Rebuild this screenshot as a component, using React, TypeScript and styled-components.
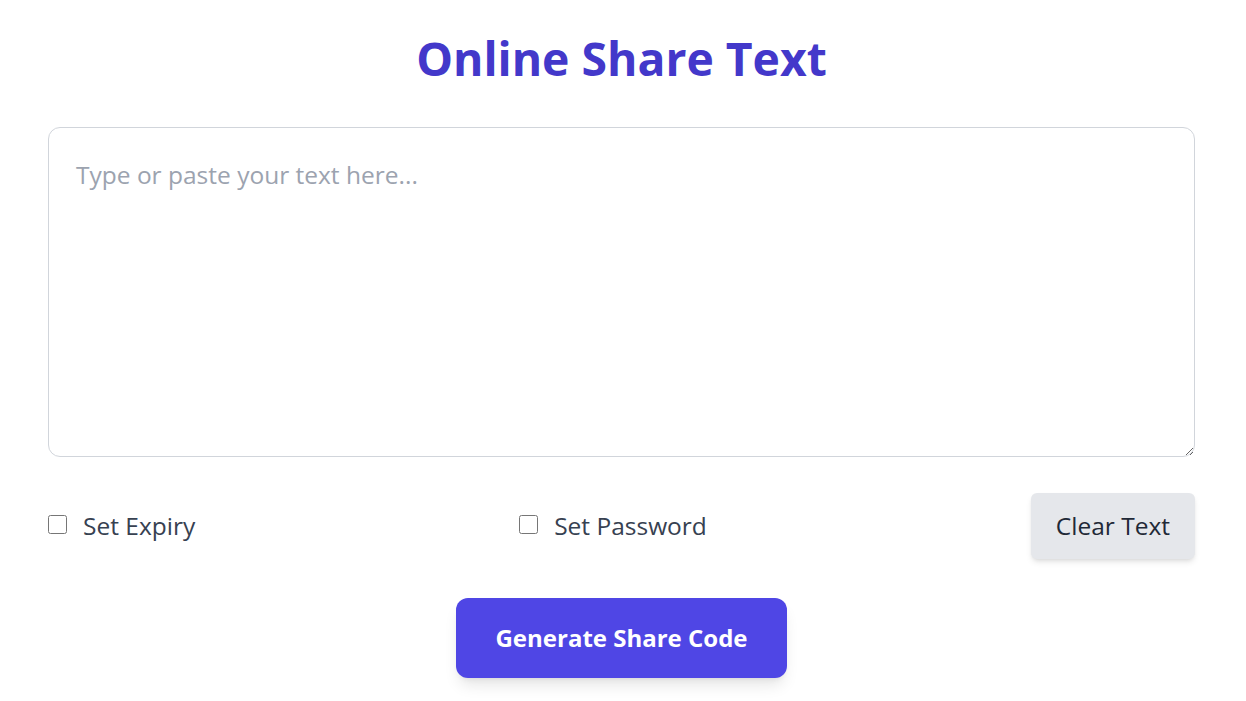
import styled, { createGlobalStyle } from "styled-components";
import { useState } from "react";

const GlobalStyle = createGlobalStyle`
    body {
        margin: 0;
        background: #ffffff;
        font-family: "Segoe UI", "Open Sans", "Noto Sans", sans-serif;
    }
    * {
        box-sizing: border-box;
    }
`

const Page = styled.div`
    padding: 31px 51px 24px 48px;
    display: flex;
    flex-direction: column;
`
const Title = styled.h1`
    margin: 0 0 40px;
    text-align: center;
    font-size: 46.3px;
    line-height: 56px;
    font-weight: 700;
    color: #4338ca;
`
const TextArea = styled.textarea`
    display: block;
    width: 100%;
    height: 330px;
    padding: 31px 27px 24px;
    border: 1px solid #d1d5db;
    border-radius: 12px;
    font-family: inherit;
    font-size: 24.5px;
    line-height: 32px;
    color: #1f2937;
    resize: vertical;
    outline: none;
    &::placeholder {
        color: #9ca3af;
    }
`
const OptionsRow = styled.div`
    margin-top: 36px;
    display: flex;
    justify-content: space-between;
    align-items: center;
`
const CheckLabel = styled.label`
    display: flex;
    align-items: center;
    gap: 16px;
    font-size: 24.5px;
    line-height: 32px;
    color: #374151;
    cursor: pointer;
`
const Check = styled.input.attrs({ type: "checkbox" })`
    width: 19px;
    height: 19px;
    margin: 0;
    margin-top: -4px;
`
const ClearButton = styled.button`
    font-family: inherit;
    font-size: 24.5px;
    line-height: 32px;
    color: #1f2937;
    background: #e5e7eb;
    border: 0;
    border-radius: 6px;
    padding: 17px 25px;
    box-shadow: 0 4px 6px -1px rgba(0, 0, 0, 0.1), 0 2px 4px -2px rgba(0, 0, 0, 0.1);
    cursor: pointer;
`
const GenerateButton = styled.button`
    align-self: center;
    margin-top: 39px;
    font-family: inherit;
    font-size: 24px;
    line-height: 32px;
    font-weight: 700;
    color: #ffffff;
    background: #4f46e5;
    border: 0;
    border-radius: 12px;
    padding: 24px 39px;
    box-shadow: 0 10px 15px -3px rgba(0, 0, 0, 0.1), 0 4px 6px -4px rgba(0, 0, 0, 0.1);
    cursor: pointer;
`

export default function App() {
    const [text, setText] = useState("");
    const [expiry, setExpiry] = useState(false);
    const [password, setPassword] = useState(false);

    return (
        <>
            <GlobalStyle />
            <Page>
                <Title>Online Share Text</Title>
                <TextArea
                    placeholder="Type or paste your text here..."
                    value={text}
                    onChange={(ev) => setText(ev.target.value)}
                />
                <OptionsRow>
                    <CheckLabel>
                        <Check checked={expiry} onChange={() => setExpiry(!expiry)} />
                        Set Expiry
                    </CheckLabel>
                    <CheckLabel>
                        <Check checked={password} onChange={() => setPassword(!password)} />
                        Set Password
                    </CheckLabel>
                    <ClearButton onClick={() => setText("")}>Clear Text</ClearButton>
                </OptionsRow>
                <GenerateButton>Generate Share Code</GenerateButton>
            </Page>
        </>
    )
}
